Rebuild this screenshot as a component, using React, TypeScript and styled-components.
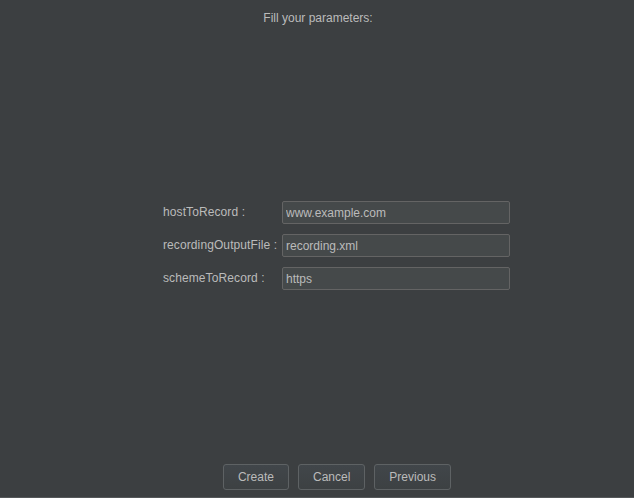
import React from "react";
import styled, { createGlobalStyle } from "styled-components";

const Global = createGlobalStyle`
  html, body { margin: 0; padding: 0; background: #3c3f41; }
  body { font-family: "Liberation Sans", Arial, sans-serif; font-size: 12px; color: #bbbbbb; }
  * { box-sizing: border-box; }
`;

const Page = styled.div`
  height: 498px;
  display: flex;
  flex-direction: column;
  background: #3c3f41;
  border-bottom: 1px solid #55585a;
`;

const Title = styled.div`
  text-align: center;
  padding-top: 11px;
  line-height: 15px;
  padding-left: 2px;
`;

const Middle = styled.div`
  flex: 1;
  display: flex;
  align-items: center;
  justify-content: center;
  padding-left: 39px;
  padding-top: 1px;
`;

const Form = styled.div`
  display: grid;
  grid-template-columns: 119px 228px;
  row-gap: 10px;
  align-items: center;
`;

const Label = styled.label`
  line-height: 23px;
  letter-spacing: 0.1px;
`;

const Input = styled.input`
  height: 23px;
  width: 228px;
  background: #45494a;
  border: 1px solid #646464;
  border-radius: 2px;
  color: #bbbbbb;
  font-family: "Liberation Sans", Arial, sans-serif;
  font-size: 12px;
  padding: 0 3px;
  outline: none;
`;

const Buttons = styled.div`
  display: flex;
  justify-content: center;
  gap: 9px;
  padding-left: 40px;
  padding-bottom: 7px;
`;

const Button = styled.button`
  height: 26px;
  padding: 0 14px;
  background: linear-gradient(#41464a, #3d4143);
  border: 1px solid #5e6264;
  border-radius: 3px;
  color: #bbbbbb;
  font-family: "Liberation Sans", Arial, sans-serif;
  font-size: 12px;
`;

const fields = [
  ["hostToRecord :", "www.example.com"],
  ["recordingOutputFile :", "recording.xml"],
  ["schemeToRecord :", "https"],
];

export default function App() {
  return (
    <Page>
      <Global />
      <Title>Fill your parameters:</Title>
      <Middle>
        <Form>
          {fields.map(([l, v]) => (
            <React.Fragment key={l}>
              <Label>{l}</Label>
              <Input defaultValue={v} />
            </React.Fragment>
          ))}
        </Form>
      </Middle>
      <Buttons>
        <Button>Create</Button>
        <Button>Cancel</Button>
        <Button>Previous</Button>
      </Buttons>
    </Page>
  );
}
